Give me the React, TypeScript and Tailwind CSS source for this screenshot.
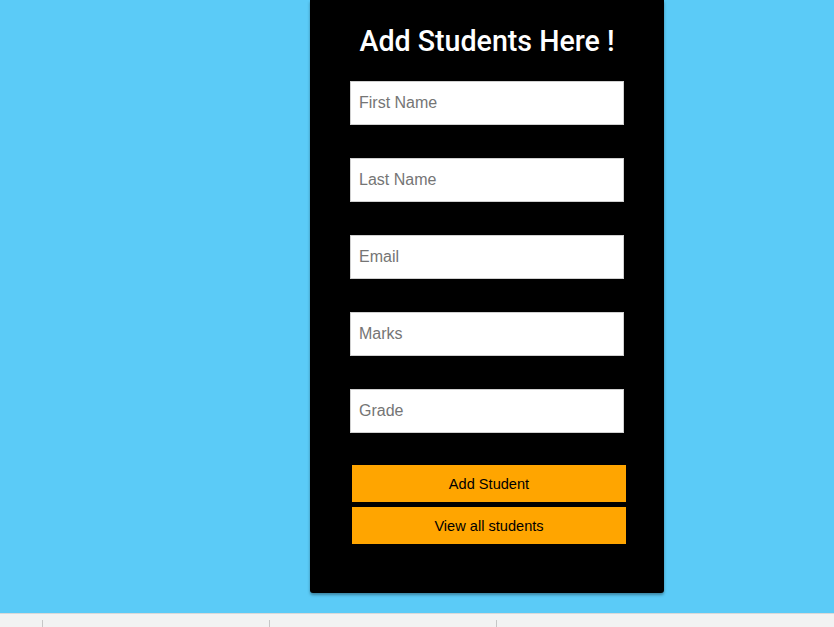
export default function App() {
  const fields = ["First Name", "Last Name", "Email", "Marks", "Grade"];

  return (
    <div className="h-[627px] w-[834px] overflow-hidden flex flex-col" style={{ fontFamily: "Arial" }}>
      <main className="h-[613px] bg-[#5bcbf7] pl-[310px]">
        <div className="w-[354px] h-[593px] bg-black rounded-b-[3px] shadow-[0_2px_3px_rgba(0,0,0,0.35)] pt-[21px]">
          <h1 className="text-center text-white text-[28.6px] leading-[40px] font-medium font-['Roboto',sans-serif]">
            Add Students Here !
          </h1>
          <form className="mt-[20px] pl-[40px] flex flex-col" onSubmit={(e) => e.preventDefault()}>
            {fields.map((f) => (
              <input
                key={f}
                type="text"
                placeholder={f}
                className="w-[274px] h-[44px] mb-[33px] bg-white border border-[#d0d0d0] px-[8px] text-[16px] font-['Liberation_Sans',Arial,sans-serif] text-black placeholder:text-[#757575] outline-none"
              />
            ))}
            <div className="pl-[2px] -mt-[1px] flex flex-col gap-[5px]">
              <button type="submit" className="w-[274px] h-[37px] pt-[2px] bg-[#ffa500] text-black text-[14.6px] font-['Liberation_Sans',Arial,sans-serif]">
                Add Student
              </button>
              <button type="button" className="w-[274px] h-[37px] pt-[2px] bg-[#ffa500] text-black text-[14.6px] font-['Liberation_Sans',Arial,sans-serif]">
                View all students
              </button>
            </div>
          </form>
        </div>
      </main>
      <footer className="flex-1 bg-[#f2f2f2] border-t border-[#d9d9d9] pt-[6px] flex">
        <div className="w-[42px]" />
        <div className="w-[227px] border-l border-[#c6c6c6]" />
        <div className="w-[227px] border-l border-[#c6c6c6]" />
        <div className="flex-1 border-l border-[#c6c6c6]" />
      </footer>
    </div>
  );
}
